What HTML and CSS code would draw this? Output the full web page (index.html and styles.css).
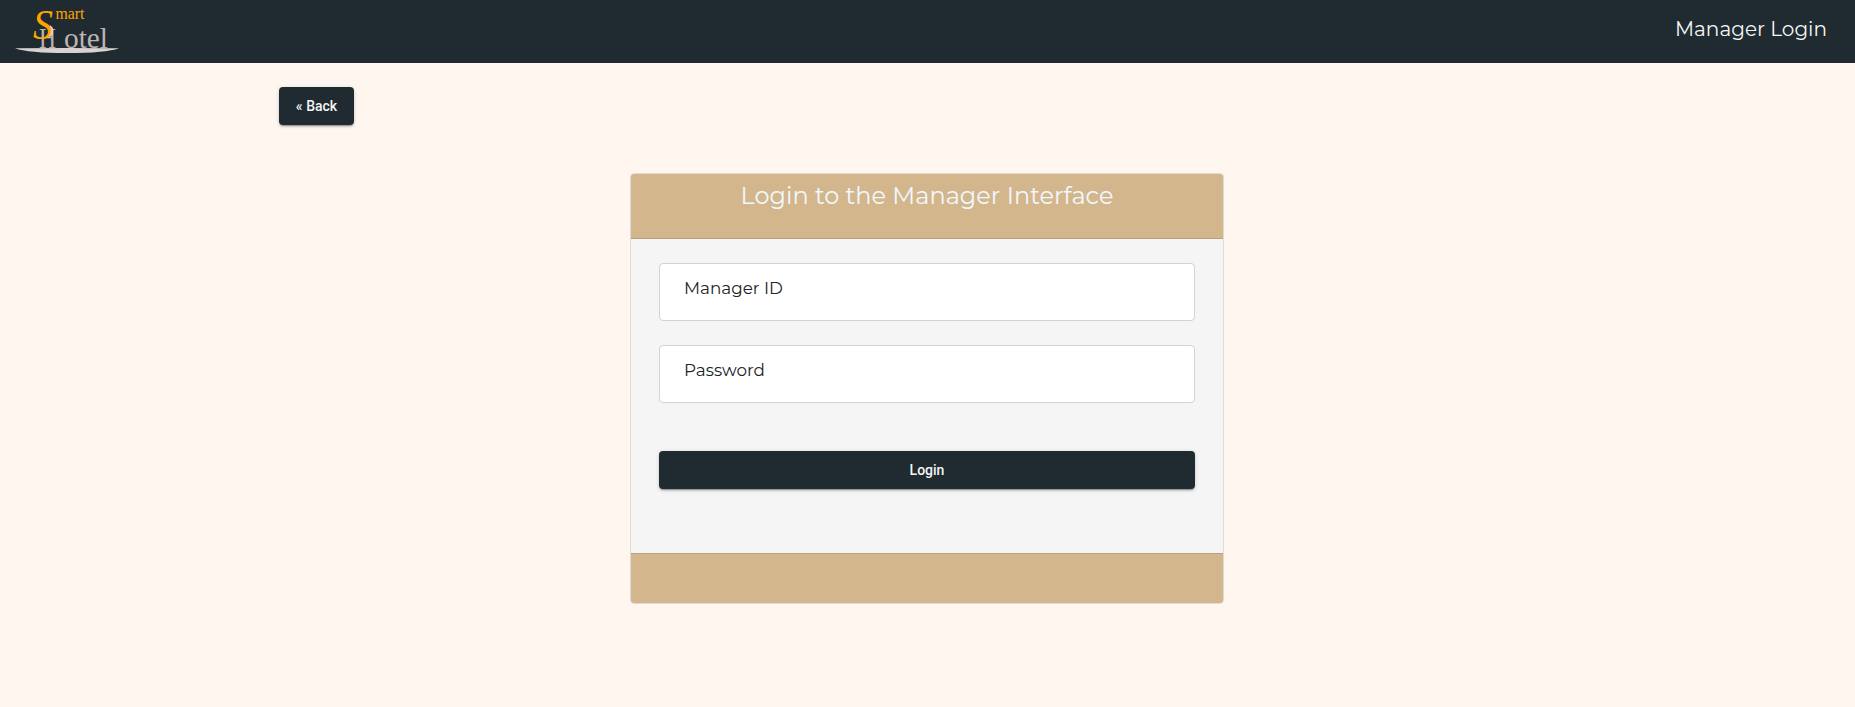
FILE: index.html
```html
<!DOCTYPE html>
<html lang="en">
<head>
<meta charset="utf-8">
<title>Manager Login</title>
<link rel="stylesheet" href="styles.css">
</head>
<body>
<header class="navbar">
  <svg class="logo" width="120" height="63" viewBox="0 0 120 63" role="img" aria-label="Smart Hotel">
    <path class="plate" d="M15 48.2Q67 48 119 48.2Q106 53 67 53Q28 53 15 48.2Z"/>
    <text class="logo-grey" x="39" y="48" font-size="29" textLength="17" lengthAdjust="spacingAndGlyphs">H</text>
    <text class="logo-grey" x="64" y="48" font-size="30" textLength="44" lengthAdjust="spacingAndGlyphs">otel</text>
    <path class="plate" d="M50 25L53 28V34L49 38Z"/>
    <text class="logo-gold logo-s" x="33" y="38.5" font-size="42" textLength="20" lengthAdjust="spacingAndGlyphs">S</text>
    <text class="logo-gold" x="55.5" y="19" font-size="16" textLength="29" lengthAdjust="spacingAndGlyphs">mart</text>
  </svg>
  <span class="nav-title">Manager Login</span>
</header>
<main class="container">
  <button class="btn btn-back">« Back</button>
  <section class="card">
    <div class="card-header"><h1 class="card-title">Login to the Manager Interface</h1></div>
    <form class="card-body">
      <label class="field">Manager ID</label>
      <label class="field">Password</label>
      <button class="btn btn-login" type="button">Login</button>
    </form>
    <div class="card-footer"></div>
  </section>
</main>
</body>
</html>
```
FILE: styles.css
```css
* { box-sizing: border-box; }
body {
  margin: 0;
  background: #fef6ef;
  color: #212529;
  font-family: Montserrat, Inter, sans-serif;
  font-weight: 400;
}
.navbar {
  display: flex;
  justify-content: space-between;
  height: 63px;
  padding-right: 28px;
  background: #1f2b31;
}
.logo { display: block; font-family: "Liberation Serif", serif; }
.plate { fill: #d8d3d1; }
.logo-grey { fill: #bdb4b0; }
.logo-gold { fill: #ffa500; }
.logo-s { font-style: italic; }
.nav-title {
  padding-top: 15px;
  font-size: 20px;
  line-height: 28px;
  color: #f5f5f5;
}
.container {
  width: 1297px;
  margin: 24px auto 0;
}
.btn {
  display: block;
  height: 38px;
  border: 0;
  border-radius: 4px;
  background: #1f2b31;
  color: #f5f5f5;
  font: 500 14px/38px Roboto, sans-serif;
  padding: 0;
  box-shadow: 0 2px 2px -1px rgba(0,0,0,.4), 0 1px 4px rgba(0,0,0,.16);
}
.btn-back { width: 75px; }
.card {
  width: 594px;
  margin: 48px 0 0 351px;
  border: 1px solid #dedcd9;
  border-radius: 4px;
  background: #f5f5f5;
  overflow: hidden;
}
.card-header {
  height: 65px;
  padding-top: 7px;
  background: #d4b68c;
  border-bottom: 1px solid #b79e7b;
  text-align: center;
}
.card-title {
  margin: 0;
  font-size: 24px;
  font-weight: 400;
  line-height: 29px;
  color: #f0f8ff;
}
.card-body { padding: 24px 28px 64px; }
.field {
  display: block;
  height: 58px;
  margin-bottom: 24px;
  padding: 13px 24px;
  background: #fff;
  border: 1px solid #ced4da;
  border-radius: 4px;
  font-size: 16.8px;
  line-height: 22px;
}
.btn-login { width: 100%; margin-top: 48px; }
.card-footer {
  height: 50px;
  background: #d4b68c;
  border-top: 1px solid #b7a17f;
}
```
